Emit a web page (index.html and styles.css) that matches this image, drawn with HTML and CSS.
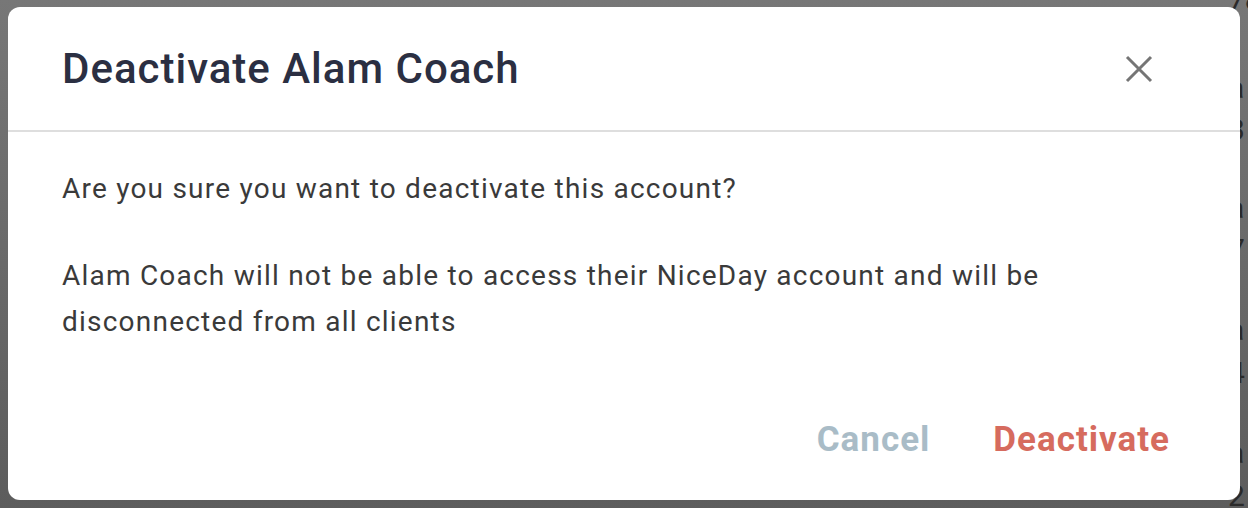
FILE: index.html
```html
<!DOCTYPE html>
<html>
<head>
<meta charset="utf-8">
<link rel="stylesheet" href="styles.css">
</head>
<body>
<div class="backdrop">
  <div class="bg-col">
    <span class="bg-t t1">78</span>
    <span class="bg-t t2">a</span>
    <span class="bg-t t3">3</span>
    <span class="bg-t t4">a</span>
    <span class="bg-t t5">7</span>
    <span class="bg-t t6">a</span>
    <span class="bg-t t7">4</span>
    <span class="bg-t t8">a</span>
    <span class="bg-t t9">2</span>
  </div>
  <div class="modal">
    <div class="modal-header">
      <h1 class="title">Deactivate Alam Coach</h1>
      <button class="close" aria-label="Close">
        <svg width="28" height="28" viewBox="0 0 28 28"><path d="M2 2 L26 26 M26 2 L2 26" stroke="#757575" stroke-width="3" fill="none"/></svg>
      </button>
    </div>
    <div class="modal-body">
      <p class="text">Are you sure you want to deactivate this account?</p>
      <p class="text">Alam Coach will not be able to access their NiceDay account and will be disconnected from all clients</p>
    </div>
    <div class="modal-footer">
      <button class="btn btn-cancel">Cancel</button>
      <button class="btn btn-danger">Deactivate</button>
    </div>
  </div>
</div>
</body>
</html>
```

FILE: styles.css
```css
html, body {
  margin: 0;
  padding: 0;
  height: 100%;
}
body {
  font-family: Roboto, "Liberation Sans", sans-serif;
  background: #6a6a6a;
  overflow: hidden;
}
.backdrop {
  position: relative;
  width: 1248px;
  height: 508px;
  background: linear-gradient(#777777, #5c5c5c);
  padding: 7px 8px 8px 8px;
  box-sizing: border-box;
}
.bg-col {
  position: absolute;
  right: 0;
  top: 0;
  width: 20px;
  height: 100%;
}
.bg-t {
  position: absolute;
  left: 0;
  font-size: 30px;
  color: #2a2a2a;
}
.t1 { top: -18px; }
.t2 { top: 70px; }
.t3 { top: 112px; }
.t4 { top: 190px; }
.t5 { top: 232px; }
.t6 { top: 312px; }
.t7 { top: 355px; }
.t8 { top: 435px; }
.t9 { top: 478px; }
.modal {
  position: relative;
  background: #ffffff;
  border-radius: 12px;
  height: 493px;
  display: flex;
  flex-direction: column;
}
.modal-header {
  height: 125px;
  flex: none;
  border-bottom: 2px solid #dedede;
  box-sizing: border-box;
  display: flex;
  align-items: center;
  justify-content: space-between;
  padding: 0 87px 0 54px;
}
.title {
  margin: 0;
  font-size: 42px;
  font-weight: 500;
  color: #2b2f42;
  letter-spacing: 1px;
}
.close {
  border: 0;
  background: none;
  padding: 0;
  width: 28px;
  height: 28px;
  display: flex;
}
.modal-body {
  padding: 34px 54px 0 54px;
  flex: 1;
}
.text {
  margin: 0 0 41px 0;
  font-size: 28px;
  line-height: 46px;
  color: #3a3a3a;
  letter-spacing: 1.22px;
  max-width: 1020px;
}
.modal-footer {
  display: flex;
  justify-content: flex-end;
  align-items: center;
  gap: 63px;
  padding: 0 70px 40px 0;
}
.btn {
  border: 0;
  background: none;
  padding: 0;
  font-family: Roboto, "Liberation Sans", sans-serif;
  font-size: 35px;
  font-weight: 700;
  letter-spacing: 1px;
}
.btn-cancel { color: #a9bcc7; }
.btn-danger { color: #d66b5e; }
```
